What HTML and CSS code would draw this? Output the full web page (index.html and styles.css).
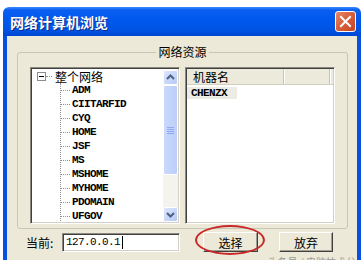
FILE: index.html
```html
<!DOCTYPE html>
<html lang="zh-CN">
<head>
  <meta charset="UTF-8">
  <meta name="viewport" content="width=device-width, initial-scale=1.0">
  <title>网络计算机浏览</title>
  <link rel="stylesheet" href="styles.css">
</head>
<body>
  <div class="window">
    <div class="titlebar">
      <span class="title">网络计算机浏览</span>
      <span class="close">
        <svg width="21" height="21" viewBox="0 0 21 21">
          <path d="M6 6 L15 15 M15 6 L6 15" stroke="#fff" stroke-width="2" stroke-linecap="square"/>
        </svg>
      </span>
    </div>
    <div class="client">
      <fieldset class="group">
        <legend>网络资源</legend>
        <div class="panes">
          <div class="tree">
            <div class="tree-items">
              <div class="root"><span class="toggle"></span><span class="root-link"></span>整个网络</div>
              <ul class="children">
                <li><span class="branch"></span>ADM</li>
                <li><span class="branch"></span>CIITARFID</li>
                <li><span class="branch"></span>CYQ</li>
                <li><span class="branch"></span>HOME</li>
                <li><span class="branch"></span>JSF</li>
                <li><span class="branch"></span>MS</li>
                <li><span class="branch"></span>MSHOME</li>
                <li><span class="branch"></span>MYHOME</li>
                <li><span class="branch"></span>PDOMAIN</li>
                <li><span class="branch"></span>UFGOV</li>
              </ul>
            </div>
            <div class="scrollbar">
              <div class="sb-btn">
                <svg width="13" height="13" viewBox="0 0 13 13"><path d="M3 8 L6.5 4.5 L10 8" fill="none" stroke="#4d6185" stroke-width="2"/></svg>
              </div>
              <div class="sb-track">
                <div class="sb-thumb">
                  <svg width="7" height="8" viewBox="0 0 7 8"><path d="M0 1.5 H7 M0 3.5 H7 M0 5.5 H7 M0 7.5 H7" stroke="#8faaf0" stroke-width="1"/></svg>
                </div>
              </div>
              <div class="sb-btn">
                <svg width="13" height="13" viewBox="0 0 13 13"><path d="M3 5 L6.5 8.5 L10 5" fill="none" stroke="#4d6185" stroke-width="2"/></svg>
              </div>
            </div>
          </div>
          <div class="list">
            <div class="list-head">
              <span class="col name">机器名</span>
              <span class="col rest"></span>
            </div>
            <div class="list-row"><span class="selected">CHENZX</span></div>
          </div>
        </div>
      </fieldset>
      <div class="bottom">
        <label class="current">当前:</label>
        <div class="input">127.0.0.1<span class="caret"></span></div>
        <button class="btn choose">选择</button>
        <button class="btn cancel">放弃</button>
      </div>
    </div>
  </div>
  <div class="watermark"><span class="wm-icon"></span>头条号 / 电脑技术分享</div>
</body>
</html>
```

FILE: styles.css
```css
body {
  margin: 0;
  width: 361px;
  height: 260px;
  overflow: hidden;
  position: relative;
  background: #fff;
  font-family: "Noto Sans CJK SC", sans-serif;
  font-size: 12px;
  color: #000;
}

.window {
  margin: 7px 0 0 3px;
  width: 358px;
}

.titlebar {
  height: 29px;
  display: flex;
  align-items: center;
  padding-left: 7px;
  border-radius: 6px 6px 0 0;
  background: linear-gradient(#3d8bff 0%, #0a5ff0 10%, #0058ee 45%, #0054e3 80%, #0046d0 100%);
}

.title {
  color: #fff;
  font-size: 14px;
  font-weight: bold;
  line-height: 16px;
  text-shadow: 1px 1px 0 #0a2b8a;
}

.close {
  margin-left: auto;
  margin-right: 5px;
  width: 21px;
  height: 21px;
  box-sizing: border-box;
  border: 1px solid #fff;
  border-radius: 3px;
  background: linear-gradient(135deg, #e8896a 0%, #d9603e 45%, #c44522 100%);
  display: flex;
  align-items: center;
  justify-content: center;
}

.close svg {
  margin: -1px;
}

.client {
  height: 230px;
  background: #ece9d8;
  border-left: 4px solid #0a50e0;
  border-right: 4px solid #0a50e0;
  padding-top: 8px;
}

.group {
  margin: 0 9px 0 10px;
  padding: 7px 12px 4px;
  border: 1px solid #c8c6b4;
  border-radius: 3px;
  min-width: 0;
}

.group legend {
  margin: 0 auto;
  padding: 0 2px;
  line-height: 16px;
  height: 16px;
}

.panes {
  display: flex;
  gap: 5px;
  height: 157px;
}

.tree,
.list {
  box-sizing: border-box;
  border: 1px solid;
  border-color: #8a8a80 #fff #fff #8a8a80;
  box-shadow: inset 1px 1px 0 #404040, inset -1px -1px 0 #d4d0c8;
  background: #fff;
  padding: 1px;
}

.tree {
  width: 150px;
  display: flex;
  overflow: hidden;
}

.tree-items {
  flex: 1;
  overflow: hidden;
  font-family: "Liberation Mono", monospace;
  font-size: 11px;
  font-weight: bold;
  letter-spacing: -0.6px;
}

.root {
  height: 14px;
  display: flex;
  align-items: center;
  font-family: "Noto Sans CJK SC", sans-serif;
  font-size: 12px;
  font-weight: normal;
  letter-spacing: 0;
}

.toggle {
  width: 9px;
  height: 9px;
  box-sizing: border-box;
  margin-left: 5px;
  border: 1px solid #8c8c8c;
  display: flex;
  align-items: center;
  justify-content: center;
}

.toggle::after {
  content: "";
  width: 5px;
  height: 1px;
  background: #000;
}

.root-link {
  width: 6px;
  margin-right: 3px;
  border-top: 1px dotted #909090;
}

.children {
  list-style: none;
  margin: 0 0 0 28px;
  padding: 0;
  border-left: 1px dotted #909090;
}

.children li {
  height: 14px;
  line-height: 14px;
  display: flex;
  align-items: center;
}

.branch {
  width: 9px;
  margin-right: 2px;
  border-top: 1px dotted #909090;
}

.scrollbar {
  width: 15px;
  display: flex;
  flex-direction: column;
  background: #f4f3ee;
  margin-top: 1px;
}

.sb-btn {
  height: 15px;
  box-sizing: border-box;
  border: 1px solid #fff;
  border-radius: 2px;
  background: linear-gradient(135deg, #dce6fd, #b7caf5);
  display: flex;
  align-items: center;
  justify-content: center;
}

.sb-track {
  flex: 1;
  display: flex;
  flex-direction: column;
}

.sb-thumb {
  height: 90px;
  box-sizing: border-box;
  border: 1px solid #fff;
  border-radius: 2px;
  background: linear-gradient(90deg, #c9d8fc, #bccefa);
  display: flex;
  align-items: center;
  justify-content: center;
}

.list {
  flex: 1;
}

.list-head {
  display: flex;
  height: 15px;
  background: #ebeadb;
  border-bottom: 1px solid #d0cfc0;
}

.col {
  box-sizing: border-box;
  line-height: 15px;
  border-right: 1px solid #c7c5b2;
  box-shadow: 1px 0 0 #fff;
}

.col.name {
  width: 97px;
  padding-left: 6px;
}

.col.rest {
  width: 46px;
}

.list-row {
  margin-top: 2px;
  height: 12px;
  font-family: "Liberation Mono", monospace;
  font-size: 11px;
  font-weight: bold;
  letter-spacing: -0.6px;
  line-height: 12px;
}

.list-row .selected {
  display: inline-block;
  width: 46px;
  padding-left: 4px;
  background: #ecebe4;
}

.bottom {
  display: flex;
  align-items: center;
  height: 20px;
  margin-top: 3px;
  padding-left: 19px;
}

.current {
  width: 36px;
}

.input {
  width: 118px;
  height: 19px;
  box-sizing: border-box;
  border: 1px solid;
  border-color: #8a8a80 #fff #fff #8a8a80;
  box-shadow: inset 1px 1px 0 #404040, inset -1px -1px 0 #d4d0c8;
  background: #fff;
  padding-left: 3px;
  display: flex;
  align-items: center;
  font-family: "Liberation Mono", monospace;
  font-size: 11px;
  letter-spacing: -0.6px;
}

.caret {
  width: 1px;
  height: 13px;
  margin-left: 2px;
  background: #000;
}

.btn {
  height: 20px;
  padding: 0;
  box-sizing: border-box;
  border: 1px solid;
  border-color: #fff #404040 #404040 #fff;
  box-shadow: inset -1px -1px 0 #a09e90;
  background: #ece9d8;
  font-family: "Noto Sans CJK SC", sans-serif;
  font-size: 12px;
  color: #000;
}

.btn.choose {
  width: 55px;
  margin-left: 23px;
  position: relative;
}

.btn.choose::after {
  content: "";
  position: absolute;
  left: -9px;
  top: -8px;
  width: 70px;
  height: 30px;
  box-sizing: border-box;
  border: 2px solid #c8282a;
  border-radius: 50%;
}

.btn.cancel {
  width: 54px;
  margin-left: 21px;
}

.watermark {
  position: absolute;
  left: 252px;
  top: 254px;
  display: flex;
  align-items: center;
  gap: 6px;
  font-size: 10px;
  color: #9a9a9a;
}

.wm-icon {
  width: 8px;
  height: 8px;
  border: 1px solid #b0b0b0;
  border-radius: 50%;
}
```
